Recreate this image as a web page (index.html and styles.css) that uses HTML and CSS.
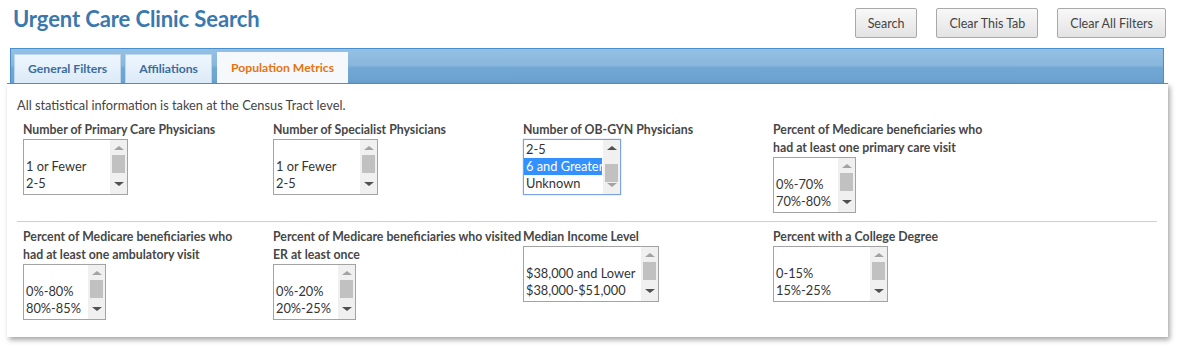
FILE: index.html
```html
<!DOCTYPE html>
<html lang="en">
<head>
  <meta charset="UTF-8" />
  <title>Urgent Care Clinic Search</title>
  <link rel="stylesheet" href="styles.css">
</head>
<body>
  <div class="header">
    <h1>Urgent Care Clinic Search</h1>
    <div class="actions">
      <button>Search</button>
      <button>Clear This Tab</button>
      <button>Clear All Filters</button>
    </div>
  </div>

  <div class="tabbar">
    <div class="tab">General Filters</div>
    <div class="tab">Affiliations</div>
    <div class="tab active">Population Metrics</div>
  </div>

  <div class="panel">
    <p class="note">All statistical information is taken at the Census Tract level.</p>

    <div class="row">
      <div class="field">
        <div class="label">Number of Primary Care Physicians</div>
        <div class="listbox w105">
          <div class="items">
            <div class="opt">&nbsp;</div>
            <div class="opt">1 or Fewer</div>
            <div class="opt">2-5</div>
          </div>
          <div class="sbar"><span class="up"></span><span class="thumb"></span><span class="down"></span></div>
        </div>
      </div>
      <div class="field">
        <div class="label">Number of Specialist Physicians</div>
        <div class="listbox w105">
          <div class="items">
            <div class="opt">&nbsp;</div>
            <div class="opt">1 or Fewer</div>
            <div class="opt">2-5</div>
          </div>
          <div class="sbar"><span class="up"></span><span class="thumb"></span><span class="down"></span></div>
        </div>
      </div>
      <div class="field">
        <div class="label">Number of OB-GYN Physicians</div>
        <div class="listbox w98 focus">
          <div class="items">
            <div class="opt">2-5</div>
            <div class="opt sel">6 and Greater</div>
            <div class="opt">Unknown</div>
          </div>
          <div class="sbar"><span class="up dark"></span><span class="thumb low"></span><span class="down light"></span></div>
        </div>
      </div>
      <div class="field">
        <div class="label">Percent of Medicare beneficiaries who<br>had at least one primary care visit</div>
        <div class="listbox w83">
          <div class="items">
            <div class="opt">&nbsp;</div>
            <div class="opt">0%-70%</div>
            <div class="opt">70%-80%</div>
          </div>
          <div class="sbar"><span class="up"></span><span class="thumb"></span><span class="down"></span></div>
        </div>
      </div>
    </div>

    <hr>

    <div class="row">
      <div class="field">
        <div class="label">Percent of Medicare beneficiaries who<br>had at least one ambulatory visit</div>
        <div class="listbox w83">
          <div class="items">
            <div class="opt">&nbsp;</div>
            <div class="opt">0%-80%</div>
            <div class="opt">80%-85%</div>
          </div>
          <div class="sbar"><span class="up"></span><span class="thumb"></span><span class="down"></span></div>
        </div>
      </div>
      <div class="field">
        <div class="label">Percent of Medicare beneficiaries who visited<br>ER at least once</div>
        <div class="listbox w83">
          <div class="items">
            <div class="opt">&nbsp;</div>
            <div class="opt">0%-20%</div>
            <div class="opt">20%-25%</div>
          </div>
          <div class="sbar"><span class="up"></span><span class="thumb"></span><span class="down"></span></div>
        </div>
      </div>
      <div class="field">
        <div class="label">Median Income Level</div>
        <div class="listbox w137">
          <div class="items">
            <div class="opt">&nbsp;</div>
            <div class="opt">$38,000 and Lower</div>
            <div class="opt">$38,000-$51,000</div>
          </div>
          <div class="sbar"><span class="up"></span><span class="thumb"></span><span class="down"></span></div>
        </div>
      </div>
      <div class="field">
        <div class="label">Percent with a College Degree</div>
        <div class="listbox w116">
          <div class="items">
            <div class="opt">&nbsp;</div>
            <div class="opt">0-15%</div>
            <div class="opt">15%-25%</div>
          </div>
          <div class="sbar"><span class="up"></span><span class="thumb"></span><span class="down"></span></div>
        </div>
      </div>
    </div>
  </div>
</body>
</html>
```

FILE: styles.css
```css
html, body {
  min-height: 349px;
}
body {
  margin: 0;
  padding: 0 9px 0 7px;
  font-family: Lato, "Liberation Sans", sans-serif;
  font-size: 12px;
  color: #333;
  background: #fff;
}
.header {
  display: flex;
  justify-content: space-between;
  align-items: flex-start;
  height: 48px;
}
h1 {
  margin: 5px 0 0 6px;
  font-size: 22px;
  font-weight: bold;
  color: #3a78b0;
  letter-spacing: -0.1px;
}
.actions {
  display: flex;
  gap: 19px;
  padding-top: 8px;
  margin-right: 2px;
}
.actions button {
  height: 30px;
  padding: 0 12px;
  font-family: inherit;
  font-size: 12.5px;
  color: #444;
  background: linear-gradient(#f8f8f8, #e3e3e3);
  border: 1px solid #a9a9a9;
  border-radius: 2px;
}
.tabbar {
  display: flex;
  gap: 4px;
  align-items: flex-end;
  height: 34px;
  margin: 0 4px 0 3px;
  padding-left: 3px;
  border: 1px solid #4a8fcd;
  border-bottom: none;
  background: linear-gradient(#94c0e3 0, #88b7dc 48%, #72a8d4 55%, #6aa1cf 100%);
}
.tab {
  height: 28px;
  line-height: 28px;
  padding: 0 13px;
  font-weight: bold;
  font-size: 12.2px;
  color: #3b6c9c;
  background: linear-gradient(#eef6fd, #dcebf8);
  border: 1px solid #bcd6ec;
  border-bottom: none;
}
.tab.active {
  height: 30px;
  line-height: 30px;
  color: #e5730f;
  background: #f6f9fb;
  border-color: #f6f9fb;
  margin-left: 1px;
}
.panel {
  background: #fff;
  border-top: 1px solid #4a8fcd;
  padding: 9px 10px 17px 10px;
  box-shadow: 2px 3px 5px rgba(0,0,0,0.35);
}
.note {
  margin: 4px 0 8px 0;
  font-size: 12.8px;
  color: #444;
}
.row {
  display: grid;
  grid-template-columns: repeat(4, 250px);
  padding-left: 6px;
}
.label {
  font-weight: bold;
  font-size: 12.3px;
  line-height: 18px;
  color: #474747;
  white-space: nowrap;
}
.listbox {
  display: flex;
  height: 54px;
  border: 1px solid #a3a3a3;
  background: #fff;
  overflow: hidden;
}
.listbox.focus {
  border-color: #7da2e3;
  box-shadow: 0 0 1px #7da2e3;
}
.w105 { width: 103px; }
.w98 { width: 96px; }
.w83 { width: 81px; }
.w137 { width: 134px; }
.w116 { width: 113px; }
.items {
  flex: 1;
  overflow: hidden;
  padding-top: 1px;
}
.opt {
  height: 17px;
  line-height: 17px;
  padding-left: 2px;
  font-size: 12.8px;
  color: #333;
  white-space: nowrap;
}
.opt.sel {
  background: #3390ff;
  color: #fff;
  margin-right: 1px;
}
.sbar {
  width: 17px;
  background: #f0f0f0;
  display: flex;
  flex-direction: column;
  align-items: center;
  padding-top: 6px;
  box-sizing: border-box;
}
.sbar .up {
  width: 0;
  height: 0;
  border-left: 5px solid transparent;
  border-right: 5px solid transparent;
  border-bottom: 4px solid #a3a3a3;
}
.sbar .up.dark { border-bottom-color: #505050; }
.sbar .thumb {
  width: 13px;
  height: 18px;
  margin-top: 5px;
  background: #c1c1c1;
}
.sbar .thumb.low { margin-top: 14px; }
.sbar .down {
  width: 0;
  height: 0;
  margin-top: 9px;
  border-left: 5px solid transparent;
  border-right: 5px solid transparent;
  border-top: 4px solid #505050;
}
.sbar .down.light { border-top-color: #a3a3a3; margin-top: 1px; }
hr {
  border: none;
  border-top: 1px solid #cfcfcf;
  margin: 8px 1px 6px 0;
  width: 1140px;
}
```
